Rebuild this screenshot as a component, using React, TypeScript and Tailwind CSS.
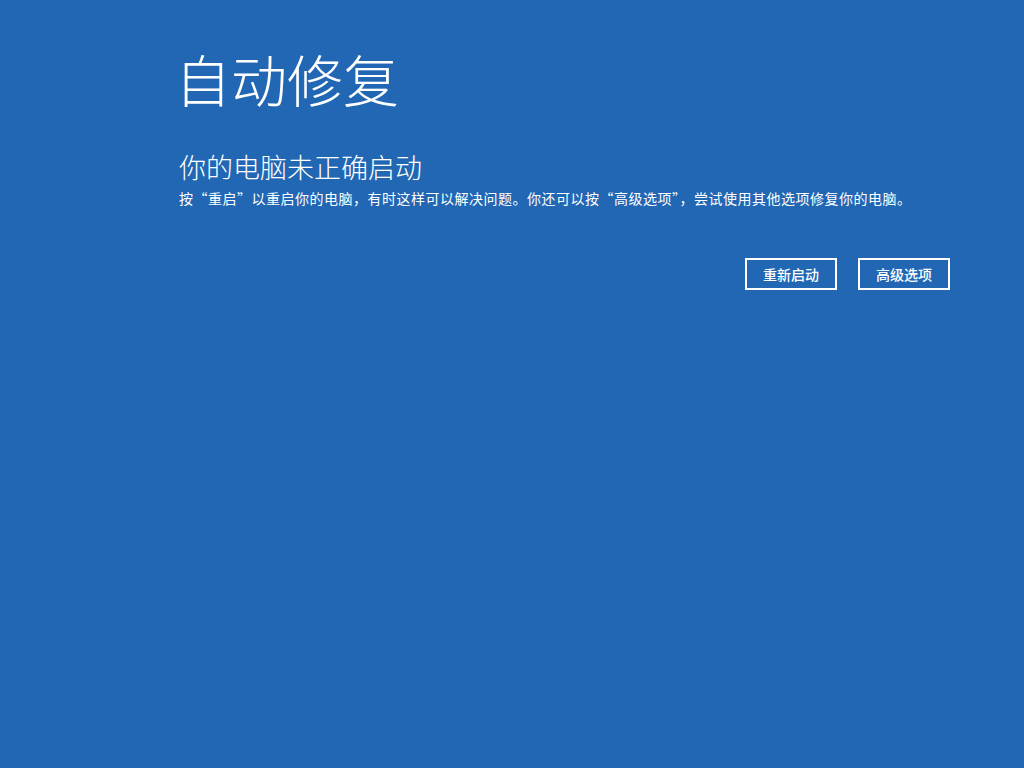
import React from "react";

export default function App() {
  const font = { fontFamily: '"Noto Sans CJK SC", "Noto Sans", sans-serif' };
  return (
    <div
      className="w-[1024px] h-[768px] bg-[#2167b4] text-white overflow-hidden pl-[175px] pr-[74px] pt-[38px]"
      style={font}
    >
      <h1 className="text-[56px] leading-[80px] font-light">自动修复</h1>
      <div className="pl-[4px] mt-[30px]">
        <h2 className="text-[27px] leading-[38px] font-light">你的电脑未正确启动</h2>
        <p className="text-[14px] leading-[20px] mt-[2px] font-normal tracking-[0.5px]">
          按“重启”以重启你的电脑，有时这样可以解决问题。你还可以按“高级选项”，尝试使用其他选项修复你的电脑。
        </p>
      </div>
      <div className="flex justify-end gap-[21px] mt-[50px]">
        <button className="w-[92px] h-[32px] border-2 border-white text-[14px] font-medium flex items-center justify-center">
          重新启动
        </button>
        <button className="w-[92px] h-[32px] border-2 border-white text-[14px] font-medium flex items-center justify-center">
          高级选项
        </button>
      </div>
    </div>
  );
}
